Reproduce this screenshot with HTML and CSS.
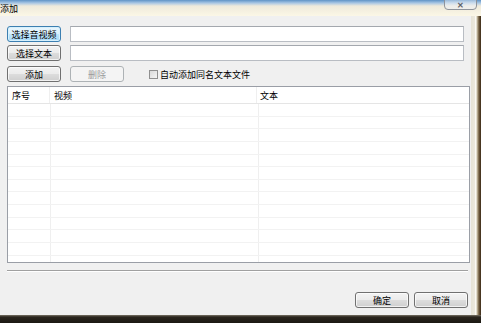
FILE: index.html
```html
<!DOCTYPE html>
<html lang="zh-CN">
<head>
  <meta charset="UTF-8" />
  <title>添加</title>
  <link rel="stylesheet" href="styles.css">
</head>
<body>
  <div class="window">
    <div class="titlebar">
      <span class="title">添加</span>
      <div class="close">&#x2715;</div>
    </div>

    <div class="middle">
      <div class="client">
        <div class="row row1">
          <button class="btn focused">选择音视频</button>
          <input class="field" type="text">
        </div>
        <div class="row row2">
          <button class="btn">选择文本</button>
          <input class="field" type="text">
        </div>
        <div class="row row3">
          <button class="btn">添加</button>
          <button class="btn" disabled>删除</button>
          <label class="check"><span class="box"></span>自动添加同名文本文件</label>
        </div>

        <div class="list">
          <div class="list-head">
            <div class="c1">序号</div>
            <div class="c2">视频</div>
            <div class="c3">文本</div>
          </div>
          <div class="list-body" id="rows"></div>
        </div>

        <div class="sep"></div>

        <div class="footer">
          <button class="btn">确定</button>
          <button class="btn">取消</button>
        </div>
      </div>
      <div class="frame-right"></div>
    </div>

    <div class="frame-bottom"></div>
  </div>

  <script>
    // empty grid rows of the list view
    const rows = document.getElementById("rows");
    for (let i = 0; i < 14; i++) {
      const r = document.createElement("div");
      r.className = "list-row";
      r.innerHTML = '<div class="c1"></div><div class="c2"></div><div class="c3"></div>';
      rows.appendChild(r);
    }
  </script>
</body>
</html>
```

FILE: styles.css
```css
body {
  margin: 0;
  width: 481px;
  height: 323px;
  overflow: hidden;
  font-family: "Noto Sans CJK SC", "Liberation Sans", sans-serif;
  font-size: 9px;
  color: #000;
  background: #f0f0f0;
}
.window {
  display: flex;
  flex-direction: column;
  width: 481px;
  height: 323px;
}

/* title bar */
.titlebar {
  position: relative;
  height: 16px;
  flex: none;
  background: linear-gradient(#5f93c6 0, #a8c6e4 3px, #efeadb 6px, #fbf7e6 16px);
  display: flex;
  align-items: center;
}
.title {
  margin-left: 0;
  margin-top: 1px;
  font-size: 9px;
  line-height: 1;
}
.close {
  position: absolute;
  left: 444px;
  top: -3px;
  width: 33px;
  height: 13px;
  box-sizing: border-box;
  border: 1px solid #8e939b;
  border-radius: 0 0 4px 4px;
  background: linear-gradient(rgba(255,255,255,0.3), rgba(235,238,242,0.7));
  color: #5d6268;
  font-size: 8px;
  font-weight: bold;
  line-height: 14px;
  text-align: center;
}

.middle {
  display: flex;
  flex: 1;
  min-height: 0;
}
.client {
  width: 471px;
  flex: none;
  background: #f0f0f0;
  padding-left: 7px;
  box-sizing: border-box;
  display: flex;
  flex-direction: column;
}
.frame-right {
  flex: 1;
  background: linear-gradient(to right, #e6e3d6 0, #ece9dd 4px, #fbfaf4 4px, #fbfaf4 5px, #c9bfa6 6px, #6e5a3c 8px, #3b2a18 10px);
}
.frame-bottom {
  height: 8px;
  flex: none;
  background: linear-gradient(#7a7466 0, #2b261e 2px, #1b1812 8px);
}

/* controls */
.row {
  display: flex;
  align-items: center;
  height: 16px;
}
.row1 { margin-top: 10px; }
.row2 { margin-top: 3px; }
.row3 { margin-top: 5px; }

.btn {
  width: 54px;
  height: 16px;
  box-sizing: border-box;
  padding: 0;
  font-family: inherit;
  font-size: 9px;
  line-height: 1;
  color: #000;
  border: 1px solid #707070;
  border-radius: 3px;
  background: linear-gradient(#f3f3f3 0, #ebebeb 50%, #dddddd 50%, #cfcfcf 100%);
  box-shadow: inset 0 0 0 1px rgba(255,255,255,0.7);
}
.btn.focused {
  border-color: #3c7fb1;
  background: linear-gradient(#eaf6fd 0, #d9f0fc 50%, #bee6fd 50%, #a7d9f5 100%);
  box-shadow: inset 0 0 0 1px #d6f0fd;
}
.btn:disabled {
  color: #9a9a9a;
  border-color: #adb2b5;
  background: #f4f4f4;
  box-shadow: none;
}
.row .btn + .btn,
.field {
  margin-left: 9px;
}
.field {
  width: 394px;
  height: 16px;
  box-sizing: border-box;
  padding: 0;
  border: 1px solid #b9bdc3;
  border-top-color: #a4a8ae;
  background: #fff;
}

.check {
  display: flex;
  align-items: center;
  margin-left: 25px;
  height: 16px;
}
.box {
  width: 9px;
  height: 9px;
  box-sizing: border-box;
  border: 1px solid #8f8f8f;
  background: linear-gradient(135deg, #d9d9d9, #f4f4f4);
  margin-right: 2px;
}

/* list view */
.list {
  width: 463px;
  height: 177px;
  margin-top: 4px;
  box-sizing: border-box;
  border: 1px solid #9a9ea6;
  background: #fff;
  overflow: hidden;
}
.list-head,
.list-row {
  display: flex;
}
.list-head {
  height: 17px;
  box-sizing: border-box;
  border-bottom: 1px solid #e5e5e5;
  align-items: center;
}
.list-head > div {
  padding-left: 4px;
  box-sizing: border-box;
  height: 100%;
  display: flex;
  align-items: center;
}
.list-row {
  height: 12.65px;
  box-sizing: border-box;
  border-bottom: 1px solid #f2f2f2;
}
.c1 { width: 42px; flex: none; border-right: 1px solid #efefef; }
.c2 { width: 207px; flex: none; border-right: 1px solid #efefef; }
.c3 { flex: 1; }
.list-head .c1 { padding-left: 4px; }
.list-head .c3 { padding-left: 3px; }

.sep {
  width: 461px;
  height: 1px;
  margin-top: 7px;
  background: #a0a0a0;
  border-bottom: 1px solid #fff;
}

.footer {
  display: flex;
  justify-content: flex-end;
  gap: 5px;
  width: 461px;
  margin-top: 20px;
}
```
